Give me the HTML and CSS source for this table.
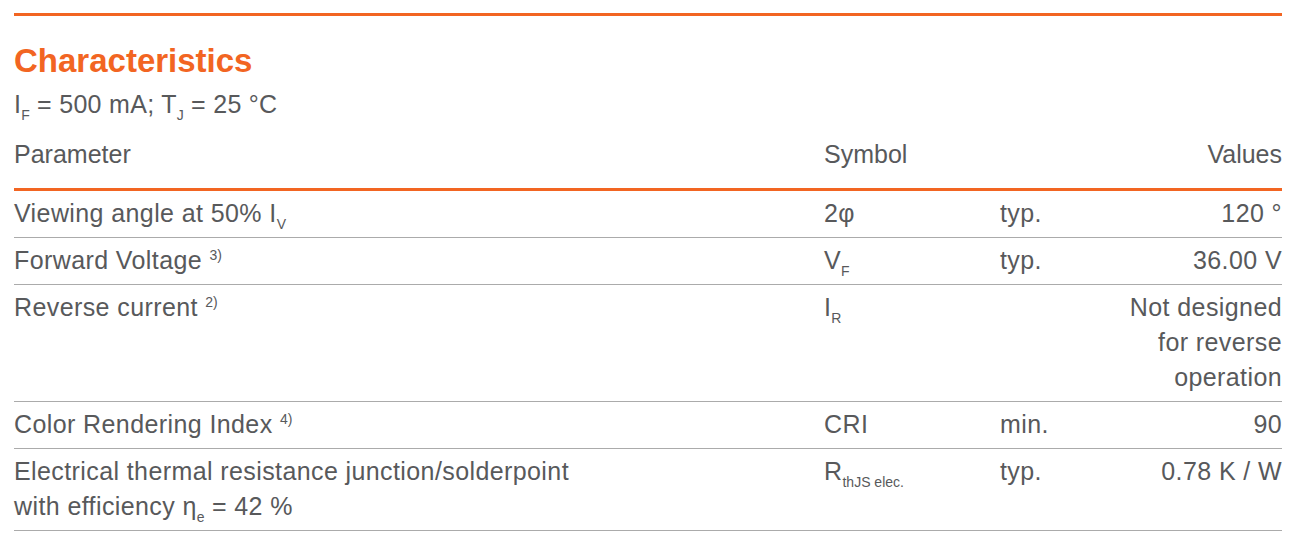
FILE: index.html
```html
<!DOCTYPE html>
<html lang="en">
<head>
<meta charset="utf-8">
<title>Characteristics</title>
<link rel="stylesheet" href="styles.css">
</head>
<body>
<section class="sheet">
  <div class="topline"></div>
  <h2 class="title">Characteristics</h2>
  <p class="cond">I<sub>F</sub> = 500 mA; T<sub>J</sub> = 25 °C</p>
  <div class="row head">
    <div>Parameter</div>
    <div>Symbol</div>
    <div></div>
    <div class="val">Values</div>
  </div>
  <div class="row">
    <div>Viewing angle at 50% I<sub>V</sub></div>
    <div>2φ</div>
    <div>typ.</div>
    <div class="val">120 °</div>
  </div>
  <div class="row">
    <div>Forward Voltage <sup>3)</sup></div>
    <div>V<sub>F</sub></div>
    <div>typ.</div>
    <div class="val">36.00 V</div>
  </div>
  <div class="row">
    <div>Reverse current <sup>2)</sup></div>
    <div>I<sub>R</sub></div>
    <div></div>
    <div class="val">Not designed for reverse operation</div>
  </div>
  <div class="row">
    <div>Color Rendering Index <sup>4)</sup></div>
    <div>CRI</div>
    <div>min.</div>
    <div class="val">90</div>
  </div>
  <div class="row">
    <div>Electrical thermal resistance junction/solderpoint<br>with efficiency η<sub>e</sub> = 42 %</div>
    <div>R<sub>thJS elec.</sub></div>
    <div>typ.</div>
    <div class="val">0.78 K / W</div>
  </div>
</section>
</body>
</html>
```

FILE: styles.css
```css
html, body {
  margin: 0;
  padding: 0;
  background: #ffffff;
}
body {
  font-family: "Liberation Sans", Arial, sans-serif;
  color: #58595b;
}
.sheet {
  width: 1268px;
  margin-left: 14px;
  padding-top: 13px;
}
.topline {
  height: 3px;
  background: #f26522;
}
.title {
  margin: 25px 0 0 0;
  font-size: 33px;
  line-height: 40px;
  font-weight: bold;
  color: #f26522;
}
.cond {
  margin: 6px 0 0 0;
  font-size: 25px;
  line-height: 35px;
  letter-spacing: 0.3px;
}
sub {
  font-size: 14px;
  vertical-align: -7px;
  line-height: 0;
  letter-spacing: 0;
}
sup {
  font-size: 14px;
  vertical-align: 9px;
  line-height: 0;
  letter-spacing: 0;
}
.row {
  display: grid;
  grid-template-columns: 810px 176px 111px 171px;
  font-size: 25px;
  line-height: 35px;
  letter-spacing: 0.4px;
  padding: 5px 0 6px 0;
  border-bottom: 1px solid #ababab;
}
.row.head {
  padding: 15px 0 16px 0;
  border-bottom: 3px solid #f26522;
  letter-spacing: 0;
}
.val {
  text-align: right;
}
```
